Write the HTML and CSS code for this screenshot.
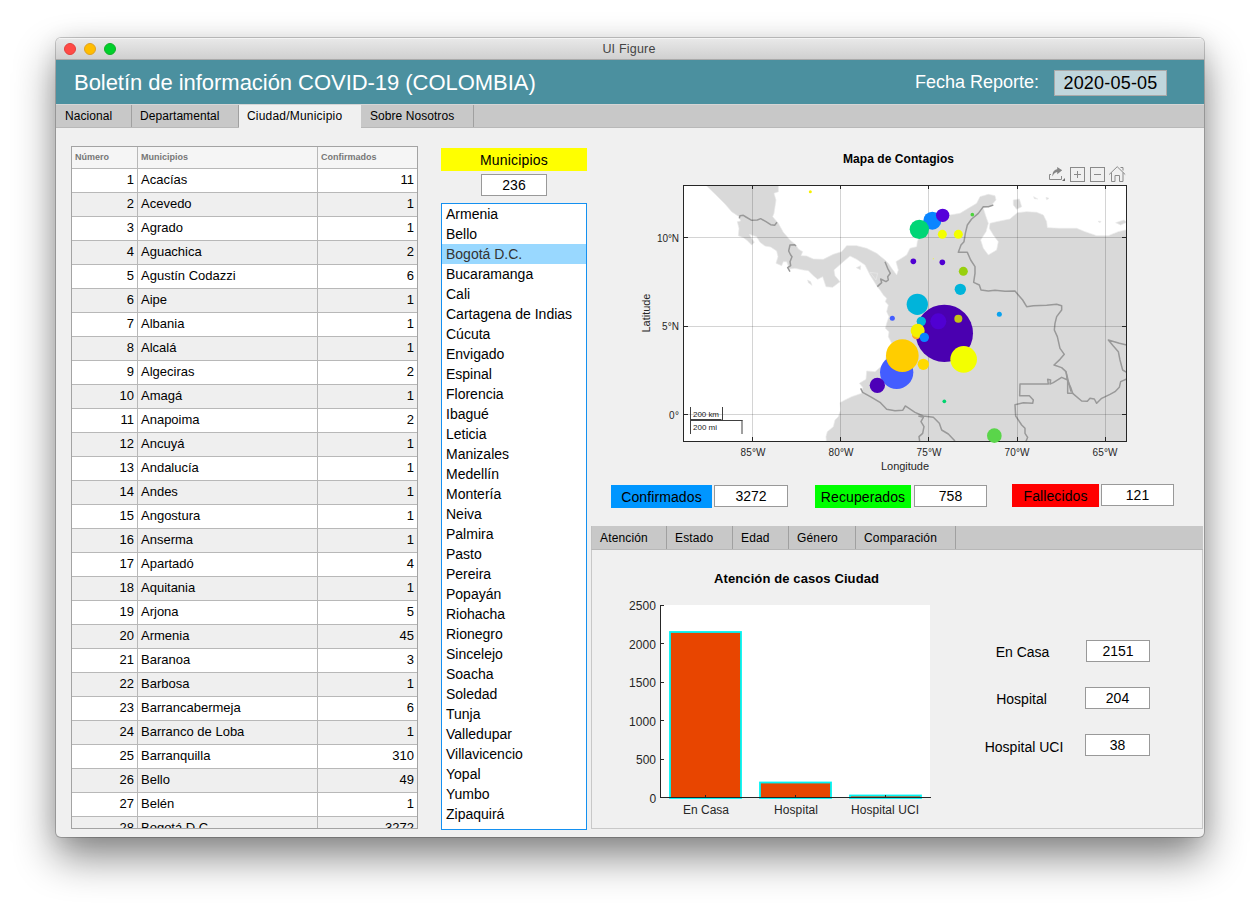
FILE: index.html
```html
<!DOCTYPE html>
<html lang="es">
<head>
<meta charset="utf-8">
<title>UI Figure</title>
<link rel="stylesheet" href="styles.css">
</head>
<body>
<div class="window">
  <div class="titlebar">
    <div class="lights"><i class="light close"></i><i class="light minimize"></i><i class="light expand"></i></div>
    <span>UI Figure</span>
  </div>
  <header class="banner">
    <h1>Boletín de información COVID-19 (COLOMBIA)</h1>
    <span class="date-label">Fecha Reporte:</span>
    <span class="date">2020-05-05</span>
  </header>
  <nav class="tabs main-tabs">
    <span class="t1">Nacional</span><span class="t2">Departamental</span><span class="t3 active">Ciudad/Municipio</span><span class="t4">Sobre Nosotros</span>
  </nav>
  <main class="content">
    <div class="table">
      <div class="tr head"><b>Número</b><b>Municipios</b><b>Confirmados</b></div>
      <div class="tr"><i>1</i><span>Acacías</span><i>11</i></div>
      <div class="tr"><i>2</i><span>Acevedo</span><i>1</i></div>
      <div class="tr"><i>3</i><span>Agrado</span><i>1</i></div>
      <div class="tr"><i>4</i><span>Aguachica</span><i>2</i></div>
      <div class="tr"><i>5</i><span>Agustín Codazzi</span><i>6</i></div>
      <div class="tr"><i>6</i><span>Aipe</span><i>1</i></div>
      <div class="tr"><i>7</i><span>Albania</span><i>1</i></div>
      <div class="tr"><i>8</i><span>Alcalá</span><i>1</i></div>
      <div class="tr"><i>9</i><span>Algeciras</span><i>2</i></div>
      <div class="tr"><i>10</i><span>Amagá</span><i>1</i></div>
      <div class="tr"><i>11</i><span>Anapoima</span><i>2</i></div>
      <div class="tr"><i>12</i><span>Ancuyá</span><i>1</i></div>
      <div class="tr"><i>13</i><span>Andalucía</span><i>1</i></div>
      <div class="tr"><i>14</i><span>Andes</span><i>1</i></div>
      <div class="tr"><i>15</i><span>Angostura</span><i>1</i></div>
      <div class="tr"><i>16</i><span>Anserma</span><i>1</i></div>
      <div class="tr"><i>17</i><span>Apartadó</span><i>4</i></div>
      <div class="tr"><i>18</i><span>Aquitania</span><i>1</i></div>
      <div class="tr"><i>19</i><span>Arjona</span><i>5</i></div>
      <div class="tr"><i>20</i><span>Armenia</span><i>45</i></div>
      <div class="tr"><i>21</i><span>Baranoa</span><i>3</i></div>
      <div class="tr"><i>22</i><span>Barbosa</span><i>1</i></div>
      <div class="tr"><i>23</i><span>Barrancabermeja</span><i>6</i></div>
      <div class="tr"><i>24</i><span>Barranco de Loba</span><i>1</i></div>
      <div class="tr"><i>25</i><span>Barranquilla</span><i>310</i></div>
      <div class="tr"><i>26</i><span>Bello</span><i>49</i></div>
      <div class="tr"><i>27</i><span>Belén</span><i>1</i></div>
      <div class="tr"><i>28</i><span>Bogotá D.C.</span><i>3272</i></div>
    </div>
    <section class="picker">
      <div class="picker-label">Municipios</div>
      <div class="field picker-count">236</div>
      <ul class="listbox">
        <li>Armenia</li><li>Bello</li><li class="selected">Bogotá D.C.</li><li>Bucaramanga</li><li>Cali</li><li>Cartagena de Indias</li><li>Cúcuta</li><li>Envigado</li><li>Espinal</li><li>Florencia</li><li>Ibagué</li><li>Leticia</li><li>Manizales</li><li>Medellín</li><li>Montería</li><li>Neiva</li><li>Palmira</li><li>Pasto</li><li>Pereira</li><li>Popayán</li><li>Riohacha</li><li>Rionegro</li><li>Sincelejo</li><li>Soacha</li><li>Soledad</li><li>Tunja</li><li>Valledupar</li><li>Villavicencio</li><li>Yopal</li><li>Yumbo</li><li>Zipaquirá</li>
      </ul>
    </section>
    <section class="details">
      <svg class="map" viewBox="591 128 612 350" width="612" height="350">
        <defs><clipPath id="plot"><rect x="130" y="121" width="1330" height="767"/></clipPath></defs>
        <rect x="683" y="185" width="444" height="257" fill="#fff"/>
        <g transform="translate(640 145) scale(.33333)">
          <g clip-path="url(#plot)">
            <path class="land" d="M198 121L228 150 255 177 275 200 297 215 302 228 292 230 297 250 295 272 310 278 320 285 335 300 343 292 332 275 328 268 350 275 360 292 375 303 392 306 410 318 414 335 408 355 425 362 430 350 440 350 448 372 465 370 490 375 505 377 520 392 533 403 548 395 553 410 558 425 578 427 600 410 585 392 582 375 610 350 630 333 650 343 675 360 690 390 712 425 720 435 730 450 740 460 736 470 745 480 740 500 747 515 740 535 736 550 747 560 745 575 755 595 740 625 735 655 705 680 680 678 678 703 658 715 668 727 665 745 635 755 615 765 600 773 602 795 595 815 585 825 580 845 562 860 558 875 560 900 1470 900 1470 252 1435 260 1405 272 1370 272 1335 260 1310 250 1260 250 1222 248 1220 230 1210 210 1190 202 1160 200 1132 203 1110 222 1070 230 1050 235 1048 250 1060 270 1075 290 1070 315 1045 330 1030 310 1022 285 1038 260 1045 235 1038 215 1030 190 1055 180 1068 165 1065 152 1045 148 1020 155 1010 175 985 190 960 205 930 210 880 210 850 240 840 270 832 290 830 305 810 310 800 330 768 350 775 375 770 390 755 370 745 355 735 345 710 325 680 310 650 302 620 302 605 320 580 328 550 343 520 342 500 333 483 332 488 320 475 312 468 300 450 285 430 262 415 235 398 215 402 205 405 185 408 165 402 145 415 140 415 115 198 115Z"/>
            <path class="land" d="M690 382L713 385 708 405ZM503 405L512 410 516 421 505 413ZM649 368L662 362 661 374ZM1120 165L1138 162 1145 185 1130 193 1120 180ZM1181 155L1193 162 1183 161ZM1218 157L1227 160 1220 164ZM1374 229L1383 229 1380 233ZM1427 233L1452 225 1460 232 1442 240Z"/>
            <path class="border" d="M298 220L300 212 310 211 318 216 335 226 352 225 362 221 378 230 392 239 404 241 411 232M468 303L463 299 450 300 446 318 452 330 456 335 450 350 452 362 443 368 450 380M735 350L743 370 751 385 743 395 745 405 738 410 722 402 725 413 712 425"/>
            <path class="border" d="M1060 180L1045 185 1030 185 1015 205 995 222 982 240 976 265 972 290 963 300 955 322 982 322 992 345 1005 365 1005 385 1001 412 1018 420 1023 435 1045 438 1065 436 1095 439 1125 438 1135 450 1148 465 1160 485 1180 482 1220 481 1250 478 1265 482 1265 495 1250 515 1245 535 1243 555 1252 575 1260 610 1273 628 1260 643 1242 660 1265 668 1278 680 1282 705 1292 727 1298 745 1283 745 1283 705 1265 697 1240 713 1230 717 1232 705 1223 703 1225 717 1140 717 1139 752 1168 752 1180 765 1178 775 1150 773 1125 779 1127 813 1145 840 1155 850 1155 865 1163 877 1158 889"/>
            <path class="border" d="M1298 745L1325 768 1342 769 1350 760 1363 762 1370 775 1385 760 1410 748 1425 740 1438 727 1442 710 1460 702M1460 600L1438 595 1405 585 1420 603 1435 620 1440 645 1448 675 1460 682M662 730L668 742 695 757 720 772 740 793 765 797 788 796 796 783 825 802 850 813 880 817 898 835 905 855 925 867 945 888M835 813L850 817 843 830 852 845 848 865 837 875 839 889"/>
            <path class="border" d="M1278 680L1284 705 1293 740"/>
          </g>
        </g>
        <path class="grid" d="M752.5 186v255M840.5 186v255M928.5 186v255M1017.5 186v255M1105.5 186v255M684 237.5h442M684 326.5h442M684 414.5h442"/>
        <rect x="683.5" y="185.5" width="443" height="256" fill="none" stroke="#262626"/>
        <path class="axis" d="M752.5 185v4M840.5 185v4M928.5 185v4M1017.5 185v4M1105.5 185v4M752.5 442v-5M840.5 442v-5M928.5 442v-5M1017.5 442v-5M1105.5 442v-5M683 237.5h5M683 326.5h5M683 414.5h5M1127 237.5h-5M1127 326.5h-5M1127 414.5h-5"/>
        <g transform="translate(640 145) scale(.33333)">
          <circle cx="913" cy="565" r="86" fill="#4a00b0"/>
          <circle cx="895" cy="529" r="24" fill="#5000d2"/>
          <circle cx="955" cy="521" r="12" fill="#c4c414"/>
          <circle cx="832" cy="478" r="32" fill="#00b4da"/>
          <circle cx="844" cy="529" r="14" fill="#00b4da"/>
          <circle cx="829" cy="570" r="13" fill="#ffa51e"/>
          <circle cx="833" cy="557" r="21" fill="#f4f000"/>
          <circle cx="853" cy="577" r="14" fill="#0a85ff"/>
          <circle cx="770" cy="682" r="50" fill="#435dff"/>
          <circle cx="787" cy="632" r="49" fill="#ffcd00"/>
          <circle cx="712" cy="721" r="23" fill="#4c00b8"/>
          <circle cx="971" cy="643" r="40" fill="#f3ff00"/>
          <circle cx="850" cy="658" r="17" fill="#ffda00"/>
          <circle cx="913" cy="769" r="5.5" fill="#00d46e"/>
          <circle cx="757" cy="520" r="7.5" fill="#435dff"/>
          <circle cx="820" cy="349" r="8.5" fill="#5000d2"/>
          <circle cx="907" cy="352" r="8.5" fill="#5000d2"/>
          <circle cx="970" cy="379" r="13.5" fill="#98d00e"/>
          <circle cx="961" cy="433" r="17" fill="#00b4da"/>
          <circle cx="907" cy="268" r="13.5" fill="#f3ff00"/>
          <circle cx="955" cy="268" r="13.5" fill="#f3ff00"/>
          <circle cx="880" cy="341" r="1.5" fill="#f3ff00"/>
          <circle cx="877" cy="227" r="27" fill="#0a85ff"/>
          <circle cx="838" cy="253" r="29" fill="#00d676"/>
          <circle cx="908" cy="211" r="20" fill="#5500da"/>
          <circle cx="997" cy="209" r="5.5" fill="#4cd43c"/>
          <circle cx="1078" cy="508" r="7.5" fill="#0aa2ee"/>
          <circle cx="511" cy="140" r="4.5" fill="#f5f000"/>
          <circle cx="1063" cy="872" r="22" fill="#5ad54a"/>
        </g>
        <text class="plot-title" x="843" y="163" textLength="111">Mapa de Contagios</text>
        <g class="ticks">
          <text x="740.5" y="456" textLength="25">85°W</text><text x="828.5" y="456" textLength="25">80°W</text><text x="916.5" y="456" textLength="25">75°W</text><text x="1004.5" y="456" textLength="25">70°W</text><text x="1092.5" y="456" textLength="25">65°W</text>
          <text x="657" y="242" textLength="22">10°N</text><text x="662" y="330" textLength="17">5°N</text><text x="669" y="419" textLength="10">0°</text>
        </g>
        <text class="axis-label" x="881" y="470" textLength="48">Longitude</text>
        <text class="axis-label" transform="translate(650 332.500) rotate(-90)" textLength="39">Latitude</text>
        <path d="M690.500 407v27M690 419.500h31.500M722.500 407v13M690 420.500h52.500M742 420v14" fill="none" stroke="#404040"/>
        <text class="scale" x="693" y="417" textLength="26">200 km</text>
        <text class="scale" x="693" y="430" textLength="24">200 mi</text>
        <g class="tools">
          <path d="M1051 174.500h-1.500v5h12v-3.500"/>
          <path d="M1052.500 176.500c-.3-4 1.500-6.700 4.700-7.200v-2.300l5 3.300-5 4v-2.300c-2 .2-3.500 1.600-4.700 4.500z" fill="#858585" stroke="none"/>
          <path d="M1065 178v3h-3z" fill="#666" stroke="none"/>
          <rect x="1070.500" y="167.500" width="14" height="14"/><path d="M1074 174.500h7M1077.500 171v7"/>
          <rect x="1090.500" y="167.500" width="14" height="14"/><path d="M1094 174.500h7"/>
          <path d="M1109.200 174.500l8-7.800 8 7.800M1111.500 172.500v9h3.500v-6h4.500v6h3.500v-9M1120.500 167.500h2.500v3"/>
        </g>
      </svg>
      <div class="stats">
        <span class="tag confirmed">Confirmados</span><span class="field f1">3272</span>
        <span class="tag recovered">Recuperados</span><span class="field f2">758</span>
        <span class="tag deceased">Fallecidos</span><span class="field f3">121</span>
      </div>
      <nav class="tabs sub-tabs"><span class="s1">Atención</span><span class="s2">Estado</span><span class="s3">Edad</span><span class="s4">Género</span><span class="s5">Comparación</span></nav>
      <div class="panel">
        <svg class="chart" viewBox="592 551 360 277" width="360" height="277">
          <rect x="660" y="605" width="270" height="193" fill="#fff"/>
          <rect class="bar" x="670" y="632" width="71" height="166"/>
          <rect class="bar" x="760" y="782.500" width="71" height="15.500"/>
          <rect class="bar" x="850" y="795.500" width="71" height="2.500"/>
          <path class="axis" d="M660.500 605v193M660 797.500h271M660 605.500h4M660 643.500h4M660 682.500h4M660 720.500h4M660 759.500h4M705.500 798v-3M795.500 798v-3M885.500 798v-3"/>
          <text class="chart-title" x="714" y="583" textLength="165">Atención de casos Ciudad</text>
          <g class="chart-ticks">
            <text x="629" y="610" textLength="27">2500</text><text x="629" y="648.500" textLength="27">2000</text><text x="629" y="687" textLength="27">1500</text><text x="629" y="725.500" textLength="27">1000</text><text x="636" y="764" textLength="20">500</text><text x="649.500" y="803" textLength="6.500">0</text>
            <text x="683" y="814" textLength="46">En Casa</text><text x="774" y="814" textLength="44">Hospital</text><text x="851" y="814" textLength="68">Hospital UCI</text>
          </g>
        </svg>
        <div class="care">
          <div><span class="c1">En Casa</span><span class="field">2151</span></div>
          <div><span class="c2">Hospital</span><span class="field wide">204</span></div>
          <div><span class="c3">Hospital UCI</span><span class="field wide">38</span></div>
        </div>
      </div>
    </section>
  </main>
</div>
</body>
</html>
```
FILE: styles.css
```css
* { box-sizing: border-box; }
body { margin: 0; background: #fff; height: 911px; overflow: hidden; padding: 38px 56px 0; font-family: "Liberation Sans", Arial, sans-serif; color: #000; }
svg { display: block; }
svg text { font-family: "Liberation Sans", Arial, sans-serif; }
i { font-style: normal; }
.window { width: 1148px; height: 799px; border-radius: 5px; background: #f0f0f0; overflow: hidden; box-shadow: 0 0 0 1px rgba(0,0,0,.2), 0 20px 42px rgba(0,0,0,.48), 0 2px 22px rgba(0,0,0,.08); }
.titlebar { height: 22px; background: linear-gradient(#e8e8e8, #d0d0d0); border-top: 1px solid #f4f4f4; border-bottom: 1px solid #aaa; display: flex; align-items: center; justify-content: center; font-size: 12.500px; color: #444; padding: 0 2px 0 0; }
.titlebar span { letter-spacing: .2px; }
.lights { display: flex; gap: 8px; width: 0; margin-left: 8px; margin-right: auto; }
.lights + span { margin-right: auto; padding-right: 8px; }
.light { flex: none; width: 12px; height: 12px; border-radius: 50%; }
.close { background: #ff4a46; border: 1px solid #e2403c; }
.minimize { background: #ffbd00; border: 1px solid #dfa023; }
.expand { background: #00d02b; border: 1px solid #12ae28; }
.banner { height: 44px; background: #4b909f; display: flex; align-items: center; color: #fff; padding: 0 37px 0 18px; }
.banner h1 { margin: 0; padding-top: 2px; font-size: 22px; font-weight: 400; letter-spacing: -.04px; flex: 1; white-space: nowrap; }
.date-label { font-size: 18px; margin-right: 15px; }
.date { width: 113px; height: 26px; margin-top: 2px; border: 1px solid #a9a9a9; background: #c0d6dc; color: #000; font-size: 18px; letter-spacing: .2px; line-height: 25px; text-align: center; }
.tabs { display: flex; height: 24px; background: #c8c8c8; border-bottom: 1px solid #b8b8b8; font-size: 12px; line-height: 23px; white-space: nowrap; }
.tabs span { padding-left: 8px; border-right: 1px solid #a0a0a0; letter-spacing: .06px; }
.main-tabs { border-top: 1px solid #d5d5d5; }
.main-tabs .active { background: #f0f0f0; height: 23px; border-right: 0; letter-spacing: .2px; }
.t1 { width: 76px; } .t2 { width: 107px; } .t3 { width: 122px; } .t4 { width: 113px; }
.tabs .t1 { padding-left: 9px; } .tabs .t4 { padding-left: 9px; }
.content { display: flex; height: 709px; padding-left: 15px; }
.table { width: 347px; height: 683px; margin: 18px 23px 0 0; border: 1px solid #a3a3a3; overflow: hidden; font-size: 13px; background: #fff; }
.tr { display: grid; grid-template-columns: 66px 180px 99px; height: 24px; line-height: 22px; border-bottom: 1px solid #b8b8b8; background: #fff; }
.tr:nth-child(odd) { background: #efefef; }
.tr > * { padding: 0 3px; border-right: 1px solid #b8b8b8; overflow: hidden; height: 23px; }
.tr > :last-child { border-right: 0; }
.tr i { text-align: right; }
.tr.head { height: 22px; line-height: 20px; font-size: 9px; background: #f5f5f5; color: #777; }
.picker { width: 146px; margin-right: 4px; padding-top: 20px; }
.picker-label { height: 23px; background: #ff0; text-align: center; font-size: 14px; letter-spacing: .2px; line-height: 24px; }
.field { display: block; height: 22px; border: 1px solid #999; background: #fff; text-align: center; font-size: 14px; line-height: 21px; }
.picker-count { width: 66px; margin: 3px auto 7px 40px; }
.listbox { list-style: none; margin: 0; padding: 0; width: 146px; height: 627px; border: 1px solid #1490f0; background: #fff; font-size: 14px; }
.listbox li { height: 20px; line-height: 21px; padding-left: 4px; white-space: nowrap; }
.listbox .selected { background: #99d8ff; color: #333; }
.details { width: 612px; }
.plot-title { font-size: 12px; font-weight: 700; }
.land { fill: #d9d9d9; stroke: #eaeaea; stroke-width: 2; stroke-linejoin: round; }
.border { fill: none; stroke: #999; stroke-width: 4.500; stroke-linejoin: round; }
.grid { fill: none; stroke: #262626; stroke-opacity: .2; }
.axis { fill: none; stroke: #262626; }
.ticks { font-size: 10px; fill: #262626; }
.axis-label { font-size: 11px; fill: #262626; }
.scale { font-size: 8px; fill: #222; }
.tools { fill: none; stroke: #8a8a8a; }
.stats { display: flex; height: 48px; padding: 6px 0 0 20px; }
.tag { height: 23px; margin-top: 1px; text-align: center; font-size: 14px; letter-spacing: .1px; line-height: 24px; }
.stats .field { margin-top: 1px; }
.confirmed { width: 101px; background: #0096ff; margin-right: 2px; }
.recovered { width: 96px; background: #0f0; margin-right: 3px; }
.deceased { width: 87px; background: #f00; margin: 0 2px 0 0; }
.f1 { width: 74px; margin-right: 27px; } .f2 { width: 73px; margin-right: 25px; } .stats .f3 { width: 73px; margin-top: 0; }
.sub-tabs { border-left: 1px solid #c0c0c0; line-height: 25px; }
.s1 { width: 75px; } .s2 { width: 66px; } .s3 { width: 56px; } .s4 { width: 67px; } .s5 { width: 100px; }
.sub-tabs span { height: 23px; letter-spacing: .15px; }
.panel { display: flex; height: 279px; border: 1px solid #c8c8c8; border-top: 0; padding-top: 1px; }
.chart-title { font-size: 13px; font-weight: 700; }
.chart-ticks { font-size: 12px; fill: #262626; }
.bar { fill: #e84500; stroke: #00f4f4; stroke-width: 1.800; }
.care { padding-top: 89px; width: 198px; font-size: 14px; }
.care div { display: flex; justify-content: flex-end; height: 47px; }
.care span:first-child { flex: 1; text-align: center; line-height: 24px; }
.care .field { width: 64px; }
.care .wide { width: 65px; margin-left: -1px; }
.care .c1 { padding-left: 7px; } .care .c2 { padding-left: 5px; } .care .c3 { padding: 1px 0 0 10px; }
```
